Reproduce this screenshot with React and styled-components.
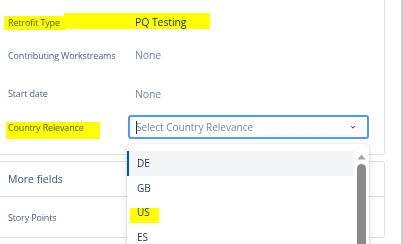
import styled, {createGlobalStyle} from 'styled-components';

const GlobalStyle = createGlobalStyle`
html, body {
	margin: 0;
	background: #fff;
	overflow: hidden;
}
body {
	font-family: "Open Sans", "Noto Sans", sans-serif;
}
`;

const Page = styled.div`
display: flex;
width: 403px;
height: 244px;
overflow: hidden;
`;

const Main = styled.div`
position: relative;
flex: 1;
padding-right: 16px;
`;

const PageScroll = styled.div`
width: 2px;
background: #cdcdcd;
`;

const Card = styled.section`
margin-left: -8px;
margin-top: ${p => p.top || 0}px;
border: 1px solid #dfe1e6;
border-radius: 3px;
background: #fff;
padding-top: ${p => p.padTop || 0}px;
padding-bottom: ${p => p.bottom || 0}px;
`;

const Row = styled.div`
display: flex;
align-items: center;
height: ${p => p.h}px;
padding-left: 15px;
`;

const Label = styled.div`
width: 127px;
flex: none;
white-space: nowrap;
font-size: 9px;
letter-spacing: -0.15px;
color: #505f79;
`;

const Value = styled.div`
font-size: 10.5px;
letter-spacing: -0.1px;
color: ${p => p.strong ? '#172b4d' : '#7a869a'};
`;

const Select = styled.div`
display: flex;
align-items: center;
width: 241px;
height: 24px;
box-sizing: border-box;
margin-left: -7px;
border: 2px solid #4c9aff;
border-radius: 3px;
padding: 0 8px 0 6px;
`;

const Caret = styled.span`
width: 1px;
height: 13px;
background: #172b4d;
margin-right: -1px;
`;

const Placeholder = styled.span`
flex: 1;
font-size: 10px;
color: #7a869a;
`;

const SectionHeader = styled.div`
display: flex;
align-items: center;
height: 34px;
padding-left: 15px;
border-bottom: 1px solid #dfe1e6;
font-size: 10.5px;
color: #42526e;
`;

const Menu = styled.div`
position: absolute;
left: 127px;
top: 144px;
width: 242px;
height: 120px;
background: #fff;
border-radius: 3px;
box-shadow: 0 4px 8px -2px rgba(9, 30, 66, 0.25), 0 0 1px rgba(9, 30, 66, 0.31);
display: flex;
padding-top: 7px;
box-sizing: border-box;
`;

const Options = styled.div`
flex: 1;
`;

const Option = styled.div`
height: 24.5px;
display: flex;
align-items: center;
padding-left: 10px;
font-size: 10px;
color: #253858;
background: ${p => p.active ? '#f4f5f7' : 'transparent'};
box-shadow: ${p => p.active ? 'inset 2px 0 0 #0052cc' : 'none'};
`;

const ScrollTrack = styled.div`
width: 15px;
display: flex;
flex-direction: column;
align-items: center;
padding-top: 3px;
`;

const Thumb = styled.div`
width: 9px;
flex: 1;
margin-top: 4px;
border-radius: 5px 5px 0 0;
background: #8a8a8a;
`;

const Highlight = styled.div`
position: absolute;
background: #ffff00;
mix-blend-mode: multiply;
`;

const Chevron = () => (
	<svg width="12" height="12" viewBox="0 0 24 24">
		<path d="M8.3 10.3a1 1 0 0 1 1.4 0L12 12.6l2.3-2.3a1 1 0 1 1 1.4 1.4l-3 3a1 1 0 0 1-1.4 0l-3-3a1 1 0 0 1 0-1.4z" fill="#344563" />
	</svg>
);

const UpArrow = () => (
	<svg width="9" height="6" viewBox="0 0 9 6">
		<path d="M4.5 0.5 L8.5 5.5 L0.5 5.5 Z" fill="#a3a3a3" />
	</svg>
);

// highlighter strokes drawn over the screenshot
const highlights = [
	{left: 4, top: 16, width: 62, height: 14},
	{left: 64, top: 13, width: 146, height: 16},
	{left: 6, top: 122, width: 94, height: 17},
	{left: 130, top: 208, width: 29, height: 15},
];

export default function App() {
	return <>
		<GlobalStyle />
		<Page>
			<Main>
				<Card top={-10} padTop={15} bottom={15}>
					<Row h={32}><Label>Retrofit Type</Label><Value strong>PQ Testing</Value></Row>
					<Row h={34}><Label>Contributing Workstreams</Label><Value>None</Value></Row>
					<Row h={43}><Label>Start date</Label><Value>None</Value></Row>
					<Row h={24}>
						<Label>Country Relevance</Label>
						<Select>
							<Caret />
							<Placeholder>Select Country Relevance</Placeholder>
							<Chevron />
						</Select>
					</Row>
				</Card>
				<Card top={6}>
					<SectionHeader>More fields</SectionHeader>
					<Row h={40}><Label>Story Points</Label></Row>
				</Card>
				<Menu>
					<Options>
						<Option active>DE</Option>
						<Option>GB</Option>
						<Option>US</Option>
						<Option>ES</Option>
					</Options>
					<ScrollTrack>
						<UpArrow />
						<Thumb />
					</ScrollTrack>
				</Menu>
				{highlights.map((h, i) => <Highlight key={i} style={h} />)}
			</Main>
			<PageScroll />
		</Page>
	</>;
}
